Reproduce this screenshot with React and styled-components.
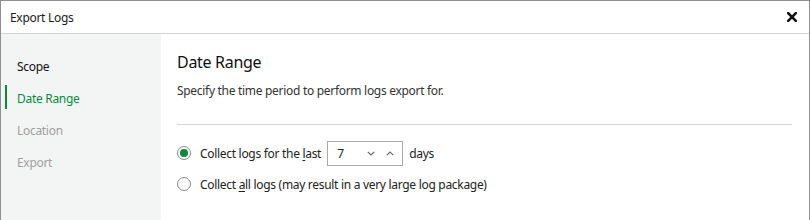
import React from "react";
import styled, { createGlobalStyle } from "styled-components";

const Global = createGlobalStyle`
  html, body { margin: 0; padding: 0; background: #fff; }
  body { font-family: "Noto Sans", "Open Sans", sans-serif; letter-spacing: -0.3px; }
`;

const Window = styled.div`
  width: 810px;
  height: 220px;
  box-sizing: border-box;
  border: 1px solid #8e8e8e;
  border-bottom: none;
  display: flex;
  flex-direction: column;
  overflow: hidden;
  background: #fff;
`;

const TitleBar = styled.div`
  height: 32px;
  flex: none;
  display: flex;
  align-items: center;
  justify-content: space-between;
  padding: 0 10px 0 9px;
  border-bottom: 1px solid #d2d2d2;
  font-size: 12px;
  color: #1a1a1a;
`;

const CloseButton = styled.button`
  border: none;
  background: none;
  padding: 0;
  width: 14px;
  height: 14px;
  display: flex;
  align-items: center;
  justify-content: center;
  cursor: pointer;
`;

const Body = styled.div`
  flex: 1;
  display: flex;
  min-height: 0;
`;

const Sidebar = styled.nav`
  width: 160px;
  flex: none;
  background: #f3f4f4;
  display: flex;
  flex-direction: column;
  padding-top: 16px;
`;

const Step = styled.div`
  position: relative;
  height: 32px;
  display: flex;
  align-items: center;
  padding-left: 16px;
  font-size: 12px;
  color: ${(p) => (p.$state === "active" ? "#0b8a3d" : p.$state === "done" ? "#111" : "#a0a0a0")};
  &::before {
    content: "";
    display: ${(p) => (p.$state === "active" ? "block" : "none")};
    position: absolute;
    left: 4px;
    top: 3px;
    bottom: 5px;
    width: 2px;
    background: #0b8a3d;
  }
`;

const Content = styled.main`
  flex: 1;
  padding: 16px 17px 0 16px;
  display: flex;
  flex-direction: column;
`;

const Heading = styled.h1`
  margin: 0;
  font-size: 16px;
  font-weight: 400;
  color: #111;
  line-height: 24px;
`;

const Description = styled.p`
  margin: 9px 0 0;
  font-size: 12px;
  color: #333;
  line-height: 16px;
`;

const Divider = styled.hr`
  border: none;
  border-top: 1px solid #d4d4d4;
  margin: 25px 0 0;
`;

const Options = styled.div`
  display: flex;
  flex-direction: column;
  gap: 7px;
  margin-top: 16px;
`;

const OptionRow = styled.label`
  display: flex;
  align-items: center;
  height: 24px;
  font-size: 12px;
  color: #222;
  gap: 9px;
`;

const Radio = styled.span`
  width: 14px;
  height: 14px;
  box-sizing: border-box;
  border-radius: 50%;
  border: 1px solid #8a8a8a;
  background: #fff;
  display: flex;
  align-items: center;
  justify-content: center;
  flex: none;
  &::after {
    content: "";
    display: ${(p) => (p.$checked ? "block" : "none")};
    width: 8px;
    height: 8px;
    border-radius: 50%;
    background: #0b8a3d;
  }
`;

const RowText = styled.span`
  display: flex;
  align-items: center;
  gap: 6px;
`;

const U = styled.span`
  text-decoration: underline;
  text-underline-offset: 2px;
`;

const Spinner = styled.div`
  width: 76px;
  height: 25px;
  box-sizing: border-box;
  border: 1px solid #a9a9a9;
  display: flex;
  align-items: center;
  padding: 0 3px 0 9px;
`;

const SpinValue = styled.span`
  flex: 1;
  font-size: 12px;
  color: #222;
`;

const SpinButton = styled.span`
  width: 19px;
  height: 22px;
  display: flex;
  align-items: center;
  justify-content: center;
`;

const Chevron = ({ up }) => (
  <svg width="8" height="5" viewBox="0 0 8 5">
    <path
      d={up ? "M0.8 4.2 L4 1 L7.2 4.2" : "M0.8 0.8 L4 4 L7.2 0.8"}
      fill="none"
      stroke="#666"
      strokeWidth="1.2"
    />
  </svg>
);

export default function App() {
  return (
    <>
      <Global />
      <Window>
        <TitleBar>
          <span>Export Logs</span>
          <CloseButton aria-label="Close">
            <svg width="10" height="10" viewBox="0 0 10 10">
              <path d="M1.2 1.2 L8.8 8.8 M8.8 1.2 L1.2 8.8" stroke="#111" strokeWidth="2.6" strokeLinecap="square" />
            </svg>
          </CloseButton>
        </TitleBar>
        <Body>
          <Sidebar>
            <Step $state="done">Scope</Step>
            <Step $state="active">Date Range</Step>
            <Step $state="todo">Location</Step>
            <Step $state="todo">Export</Step>
          </Sidebar>
          <Content>
            <Heading>Date Range</Heading>
            <Description>Specify the time period to perform logs export for.</Description>
            <Divider />
            <Options>
              <OptionRow>
                <Radio $checked />
                <RowText>
                  <span>
                    Collect logs for the <U>l</U>ast
                  </span>
                  <Spinner>
                    <SpinValue>7</SpinValue>
                    <SpinButton><Chevron /></SpinButton>
                    <SpinButton><Chevron up /></SpinButton>
                  </Spinner>
                  <span>days</span>
                </RowText>
              </OptionRow>
              <OptionRow>
                <Radio />
                <span>
                  Collect <U>a</U>ll logs (may result in a very large log package)
                </span>
              </OptionRow>
            </Options>
          </Content>
        </Body>
      </Window>
    </>
  );
}
